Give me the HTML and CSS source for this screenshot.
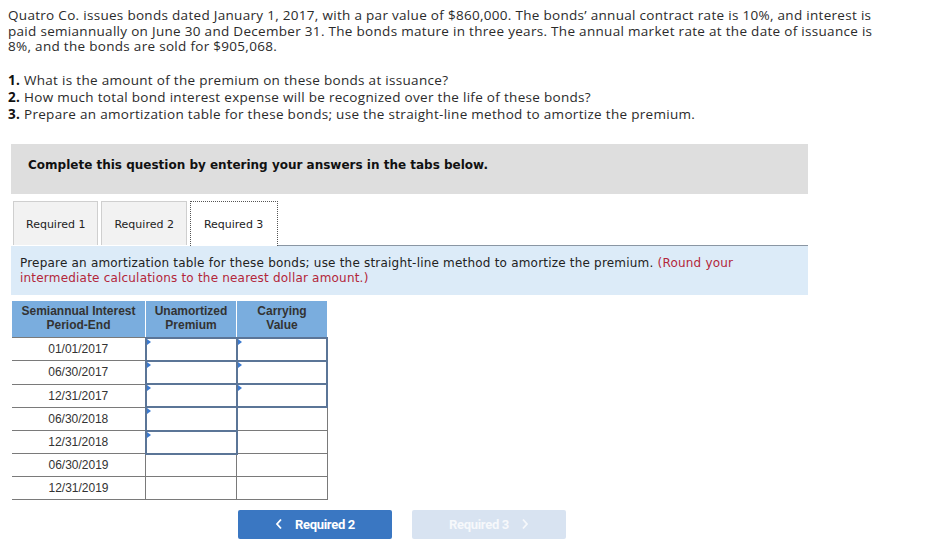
FILE: index.html
```html
<!DOCTYPE html>
<html lang="en">
<head>
    <meta charset="UTF-8">
    <title>Bonds Premium - Amortization</title>
    <link rel="stylesheet" href="styles.css">
</head>
<body>
    <div class="question">
        <p class="intro">Quatro Co. issues bonds dated January 1, 2017, with a par value of $860,000. The bonds’ annual contract rate is 10%, and interest is paid semiannually on June 30 and December 31. The bonds mature in three years. The annual market rate at the date of issuance is 8%, and the bonds are sold for $905,068.</p>
        <ol class="parts">
            <li><b>1.</b> What is the amount of the premium on these bonds at issuance?</li>
            <li><b>2.</b> How much total bond interest expense will be recognized over the life of these bonds?</li>
            <li><b>3.</b> Prepare an amortization table for these bonds; use the straight-line method to amortize the premium.</li>
        </ol>
    </div>

    <div class="banner">Complete this question by entering your answers in the tabs below.</div>

    <div class="tabs">
        <div class="tab">Required 1</div>
        <div class="tab">Required 2</div>
        <div class="tab active">Required 3</div>
        <div class="tab-rest"></div>
    </div>

    <div class="instructions">
        Prepare an amortization table for these bonds; use the straight-line method to amortize the premium. <span class="hint">(Round your intermediate calculations to the nearest dollar amount.)</span>
    </div>

    <table class="amort">
        <thead>
            <tr>
                <th class="c1">Semiannual Interest<br>Period-End</th>
                <th class="c2">Unamortized<br>Premium</th>
                <th class="c3">Carrying<br>Value</th>
            </tr>
        </thead>
        <tbody>
            <tr><td>01/01/2017</td><td class="input"><span class="flag"></span></td><td class="input"><span class="flag"></span></td></tr>
            <tr><td>06/30/2017</td><td class="input"><span class="flag"></span></td><td class="input"><span class="flag"></span></td></tr>
            <tr><td>12/31/2017</td><td class="input"><span class="flag"></span></td><td class="input"><span class="flag"></span></td></tr>
            <tr><td>06/30/2018</td><td class="input"><span class="flag"></span></td><td></td></tr>
            <tr><td>12/31/2018</td><td class="input"><span class="flag"></span></td><td></td></tr>
            <tr><td>06/30/2019</td><td></td><td></td></tr>
            <tr><td>12/31/2019</td><td></td><td></td></tr>
        </tbody>
    </table>

    <div class="nav">
        <button class="nav-btn prev">
            <svg width="8" height="12" viewBox="0 0 8 12"><path d="M6 1.5 L2 6 L6 10.5" fill="none" stroke="currentColor" stroke-width="1.8"/></svg>
            Required 2
        </button>
        <button class="nav-btn next" disabled>
            Required 3
            <svg width="8" height="12" viewBox="0 0 8 12"><path d="M2 1.5 L6 6 L2 10.5" fill="none" stroke="currentColor" stroke-width="1.8"/></svg>
        </button>
    </div>
</body>
</html>
```

FILE: styles.css
```css
body { margin: 0; padding: 8px 0 0 8px; background: #fff; color: #1a1a1a; width: 900px; }
.question { width: 872px; font-family: "Open Sans", sans-serif; font-size: 13.5px; letter-spacing: 0.3px; color: #2b2b2b; }
.intro { margin: 0; line-height: 15.5px; }
.parts { list-style: none; margin: 17px 0 0; padding: 0; line-height: 17px; }
.parts b { font-weight: 700; color: #111; }

.banner { margin: 21px 0 0 3px; width: 797px; height: 50px; box-sizing: border-box; padding: 14px 0 0 17px; background: #dedede; font-family: "DejaVu Sans", Verdana, sans-serif; font-size: 12px; font-weight: bold; color: #111; }

.tabs { display: flex; margin: 7px 0 0 3px; width: 797px; height: 45px; }
.tab { box-sizing: border-box; height: 44px; margin-right: 3px; padding: 16px 12px 0; background: #f2f2f2; border: 1px solid #cfcfcf; border-bottom: none; font-family: "DejaVu Sans", Verdana, sans-serif; font-size: 11px; color: #222; }
.tab:first-child { margin-left: 2px; }
.tab.active { height: 45px; padding: 16px 14px 0 13px; background: #fff; border: 1px dotted #555; border-bottom: none; margin-right: 0; }
.tab-rest { flex: 1; border-bottom: 1px solid #8a96a3; }

.instructions { margin-left: 3px; width: 797px; box-sizing: border-box; padding: 10px 9px 9px; background: #dcebf8; font-family: "DejaVu Sans", Verdana, sans-serif; font-size: 12px; letter-spacing: 0.2px; line-height: 15px; color: #222; }
.hint { color: #b3263a; }

.amort { margin: 6px 0 0 4px; border-collapse: collapse; font-family: "Liberation Sans", Arial, sans-serif; font-size: 12px; color: #333; }
.amort th { background: #7aadde; font-weight: bold; line-height: 14px; padding: 3px 4px 5px; border-left: 1px solid #fff; }
.amort th.c1 { width: 125px; border-left: none; }
.amort th.c2 { width: 82px; }
.amort th.c3 { width: 82px; }
.amort td { height: 21.3px; padding: 0; text-align: center; border-top: 1px solid #7a7a7a; border-left: 1px solid #7a7a7a; }
.amort td:first-child { border-left: none; }
.amort tr:last-child td { border-bottom: 1px solid #7a7a7a; }
.amort td:last-child { border-right: 1px solid #7a7a7a; }
.amort td.input { position: relative; border: 2px solid #5b7597; }
.flag { position: absolute; left: 0; top: 0; width: 0; height: 0; border-top: 3px solid transparent; border-bottom: 3px solid transparent; border-left: 4px solid #3b7ad0; }

.nav { display: flex; gap: 20px; margin: 10px 0 0 230px; }
.nav-btn { display: flex; align-items: center; justify-content: center; gap: 12px; width: 154px; height: 29px; border: none; border-radius: 2px; font-family: Roboto, sans-serif; font-size: 13px; font-weight: bold; letter-spacing: -0.3px; color: #fff; }
.prev { background: #3a77c2; }
.next { background: #d8e3f1; color: #f6f8fb; }
```
